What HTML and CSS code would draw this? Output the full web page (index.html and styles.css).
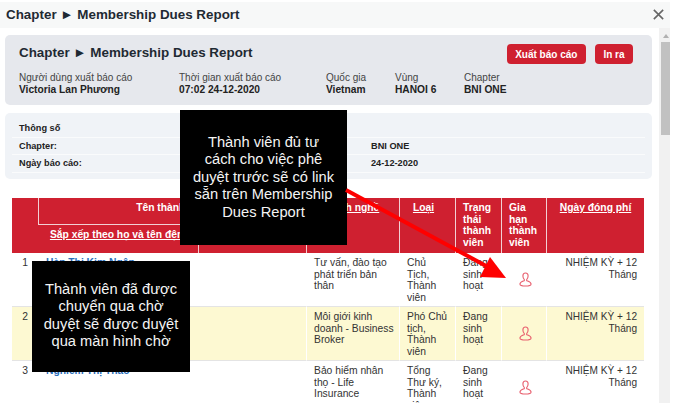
FILE: index.html
```html
<!DOCTYPE html>
<html lang="vi">
<head>
<meta charset="utf-8">
<title>Membership Dues Report</title>
<link rel="stylesheet" href="styles.css">
</head>
<body>
<div class="modal">
  <header class="modal-head">
    <h1 class="modal-title">Chapter ► Membership Dues Report</h1>
    <svg class="close" width="11" height="11" viewBox="0 0 13 13"><path d="M1 1l11 11M12 1L1 12" stroke="#666" stroke-width="1.9" fill="none"/></svg>
  </header>
  <div class="modal-body">
    <main class="content">
      <section class="card summary">
        <div class="summary-top">
          <h2 class="summary-title">Chapter ► Membership Dues Report</h2>
          <div class="actions">
            <button class="btn">Xuất báo cáo</button>
            <button class="btn">In ra</button>
          </div>
        </div>
        <div class="meta">
          <div class="meta-item m1"><span>Người dùng xuất báo cáo</span><b>Victoria Lan Phương</b></div>
          <div class="meta-item m2"><span>Thời gian xuất báo cáo</span><b>07:02 24-12-2020</b></div>
          <div class="meta-item m3"><span>Quốc gia</span><b>Vietnam</b></div>
          <div class="meta-item m4"><span>Vùng</span><b>HANOI 6</b></div>
          <div class="meta-item m5"><span>Chapter</span><b>BNI ONE</b></div>
        </div>
      </section>
      <section class="card params">
        <div class="param"><b class="param-k">Thông số</b><b></b></div>
        <div class="param"><b class="param-k">Chapter:</b><b>BNI ONE</b></div>
        <div class="param"><b class="param-k">Ngày báo cáo:</b><b>24-12-2020</b></div>
      </section>
      <div class="table-clip">
      <table class="dues">
        <colgroup>
          <col class="c1"><col class="c2"><col class="c3"><col class="c4"><col class="c5"><col class="c6"><col class="c7"><col class="c8">
        </colgroup>
        <thead>
          <tr class="h1">
            <th rowspan="2"></th>
            <th colspan="2" class="center">Tên thành viên</th>
            <th rowspan="2" class="center job"><u>Ngành nghề</u></th>
            <th rowspan="2" class="center kind"><u>Loại</u></th>
            <th rowspan="2">Trạng thái thành viên</th>
            <th rowspan="2">Gia hạn thành viên</th>
            <th rowspan="2" class="center"><u>Ngày đóng phí</u></th>
          </tr>
          <tr class="h2">
            <th class="center"><u>Sắp xếp theo họ và tên đệm</u></th>
            <th></th>
          </tr>
        </thead>
        <tbody>
          <tr>
            <td class="num">1</td><td colspan="2"><a class="name">Hàn Thị Kim Ngân</a></td>
            <td>Tư vấn, đào tạo phát triển bản thân</td><td class="role">Chủ Tịch, Thành viên</td><td>Đang sinh hoạt</td>
            <td class="icon-cell"><svg class="person" width="13" height="15" viewBox="0 0 14 16"><path d="M7 1C5 1 4.200 2.500 4.200 4.200c0 1.700.8 3 1.500 3.800v1.200C3.500 10 1 10.800 1 12.800 1 14.300 2.500 15 7 15s6-.7 6-2.200c0-2-2.500-2.800-4.700-3.600V8c.7-.8 1.500-2.100 1.500-3.800C9.800 2.500 9 1 7 1z" fill="none" stroke="#e8606f" stroke-width="1.200"/></svg></td>
            <td class="right">NHIỆM KỲ + 12 Tháng</td>
          </tr>
          <tr class="alt">
            <td class="num">2</td><td colspan="2"><a class="name">Nguyễn Thị Lan</a></td>
            <td>Môi giới kinh doanh - Business Broker</td><td class="role">Phó Chủ tịch, Thành viên</td><td>Đang sinh hoạt</td>
            <td class="icon-cell"><svg class="person" width="13" height="15" viewBox="0 0 14 16"><path d="M7 1C5 1 4.200 2.500 4.200 4.200c0 1.700.8 3 1.500 3.800v1.200C3.500 10 1 10.800 1 12.800 1 14.300 2.500 15 7 15s6-.7 6-2.200c0-2-2.500-2.800-4.700-3.600V8c.7-.8 1.500-2.100 1.500-3.800C9.800 2.500 9 1 7 1z" fill="none" stroke="#e8606f" stroke-width="1.200"/></svg></td>
            <td class="right">NHIỆM KỲ + 12 Tháng</td>
          </tr>
          <tr>
            <td class="num">3</td><td colspan="2"><a class="name">Nghiêm Thị Thảo</a></td>
            <td>Bảo hiểm nhân thọ - Life Insurance</td><td class="role">Tổng Thư ký, Thành viên</td><td>Đang sinh hoạt</td>
            <td class="icon-cell"><svg class="person" width="13" height="15" viewBox="0 0 14 16"><path d="M7 1C5 1 4.200 2.500 4.200 4.200c0 1.700.8 3 1.500 3.800v1.200C3.500 10 1 10.800 1 12.800 1 14.300 2.500 15 7 15s6-.7 6-2.200c0-2-2.500-2.800-4.700-3.600V8c.7-.8 1.500-2.100 1.500-3.800C9.800 2.500 9 1 7 1z" fill="none" stroke="#e8606f" stroke-width="1.200"/></svg></td>
            <td class="right">NHIỆM KỲ + 12 Tháng</td>
          </tr>
        </tbody>
      </table>
      </div>
    </main>
    <div class="scrollbar"><span class="arrow"></span><span class="thumb"></span></div>
  </div>
</div>
<div class="note note-a"><p class="note-text">Thành viên đủ tư<br>cách cho việc phê<br>duyệt trước sẽ có link<br>sẵn trên Membership<br>Dues Report</p></div>
<div class="note note-b"><p class="note-text">Thành viên đã được<br>chuyển qua chờ<br>duyệt sẽ được duyệt<br>qua màn hình chờ</p></div>
<svg class="pointer" width="673" height="411" viewBox="0 0 673 411"><path d="M346 190L488 267" stroke="#fe0000" stroke-width="4" fill="none"/><path d="M490 257L506 278L480 277z" fill="#fe0000"/></svg>
</body>
</html>
```
FILE: styles.css
```css
* { box-sizing: border-box; }
html, body { margin: 0; padding: 0; }
body { width: 673px; height: 411px; overflow: hidden; background: #fff; font-family: "Liberation Sans", Arial, sans-serif; color: #222; position: relative; }
.modal { width: 670px; padding-top: 2px; height: 403px; display: flex; flex-direction: column; }
.modal-head { height: 26px; flex: none; background: #f7f8f8; display: flex; align-items: center; justify-content: space-between; padding: 0 6px 0 6px; }
.close { margin-bottom: 2px; }
.modal-title { margin: 0 0 2px; font-size: 13.400px; font-weight: bold; color: #1f2a33; }
.modal-body { flex: 1; display: flex; min-height: 0; }
.content { width: 659px; padding: 7px 7px 0 5px; overflow: hidden; }
.card { border-radius: 5px; }
.summary { background: #e6e8ed; height: 70px; padding: 9px 14px 0 14px; }
.summary-top { display: flex; justify-content: space-between; align-items: flex-start; height: 28px; }
.summary-title { margin: 1px 0 0; font-size: 13.400px; font-weight: bold; color: #1f2a33; }
.actions { display: flex; gap: 9px; margin-right: 5px; }
.btn { border: 0; background: #cf2030; color: #fff; font: bold 10px "Liberation Sans", Arial, sans-serif; height: 20px; padding: 0 8.500px; border-radius: 4px; }
.meta { display: flex; font-size: 10px; line-height: 11.500px; }
.meta-item { display: flex; flex-direction: column; }
.meta-item span { color: #444; }
.meta-item b { font-weight: bold; font-size: 10.200px; color: #222; }
.m1 { width: 160px; }
.m2 { width: 147px; }
.m3 { width: 69px; }
.m4 { width: 69px; }
.params { background: #f0f3f7; height: 66px; margin-top: 8px; padding: 7px 7px 0 7px; font-size: 9.200px; }
.param { display: flex; height: 17.500px; align-items: center; border-bottom: 1px solid #fafbfc; padding-left: 7px; color: #222; }
.param-k { width: 352px; }
.table-clip { margin: 19px 0 0 7px; }
.dues { border-collapse: separate; border-spacing: 0; table-layout: fixed; width: 632px; font-size: 10.300px; line-height: 11.700px; }
.c1 { width: 26px; } .c2 { width: 160px; } .c3 { width: 108px; } .c4 { width: 93px; } .c5 { width: 56px; } .c6 { width: 46px; } .c7 { width: 45px; } .c8 { width: 98px; }
.dues th { background: #cf2030; color: #fff; font-weight: bold; font-size: 10.300px; text-align: left; vertical-align: top; padding: 4px 7px; border-left: 1px solid #f2d0d4; }
.dues th:first-child { border-left: 0; }
.dues .h1 th { height: 26px; }
.dues .h2 th { height: 28px; border-top: 1px solid #f2d0d4; }
.dues th.center { text-align: center; }
.dues th.job { padding-right: 14px; }
.dues th.kind { padding-right: 15px; }
.dues td { vertical-align: top; padding: 4px 3px 0 7px; height: 54px; border-bottom: 1.500px solid #e4e4e4; border-left: 1px solid #fff; color: #333; }
.dues td:first-child { border-left: 0; }
.dues td.num { padding: 4px 0 0; text-align: center; }
.dues td.role { padding-right: 7px; }
.alt td { background: #fdf9d2; }
.name { color: #2a6ebb; font-weight: bold; }
.dues td.right { text-align: right; padding-right: 7px; font-size: 10.100px; }
.dues td.icon-cell { padding: 19px 0 0 2px; }
.person { display: block; margin: 0 auto; }
.scrollbar { width: 11px; height: 100%; background: #f1f1f1; display: flex; flex-direction: column; align-items: center; padding: 6px 0 0 2px; }
.arrow { width: 0; height: 0; border-left: 3px solid transparent; border-right: 3px solid transparent; border-bottom: 4px solid #b0b0b0; }
.thumb { width: 9px; height: 93px; background: #c1c1c1; margin-top: 4px; }
.note { position: absolute; background: #000; color: #f4f4f4; font-size: 14.700px; line-height: 17.400px; text-align: center; display: flex; align-items: center; justify-content: center; white-space: nowrap; }
.note-text { margin: 0; }
.note-a { left: 180px; top: 110px; width: 167px; height: 135px; }
.note-b { left: 32px; top: 261px; width: 158px; height: 111px; padding-bottom: 2px; }
.pointer { position: absolute; left: 0; top: 0; pointer-events: none; }
```
